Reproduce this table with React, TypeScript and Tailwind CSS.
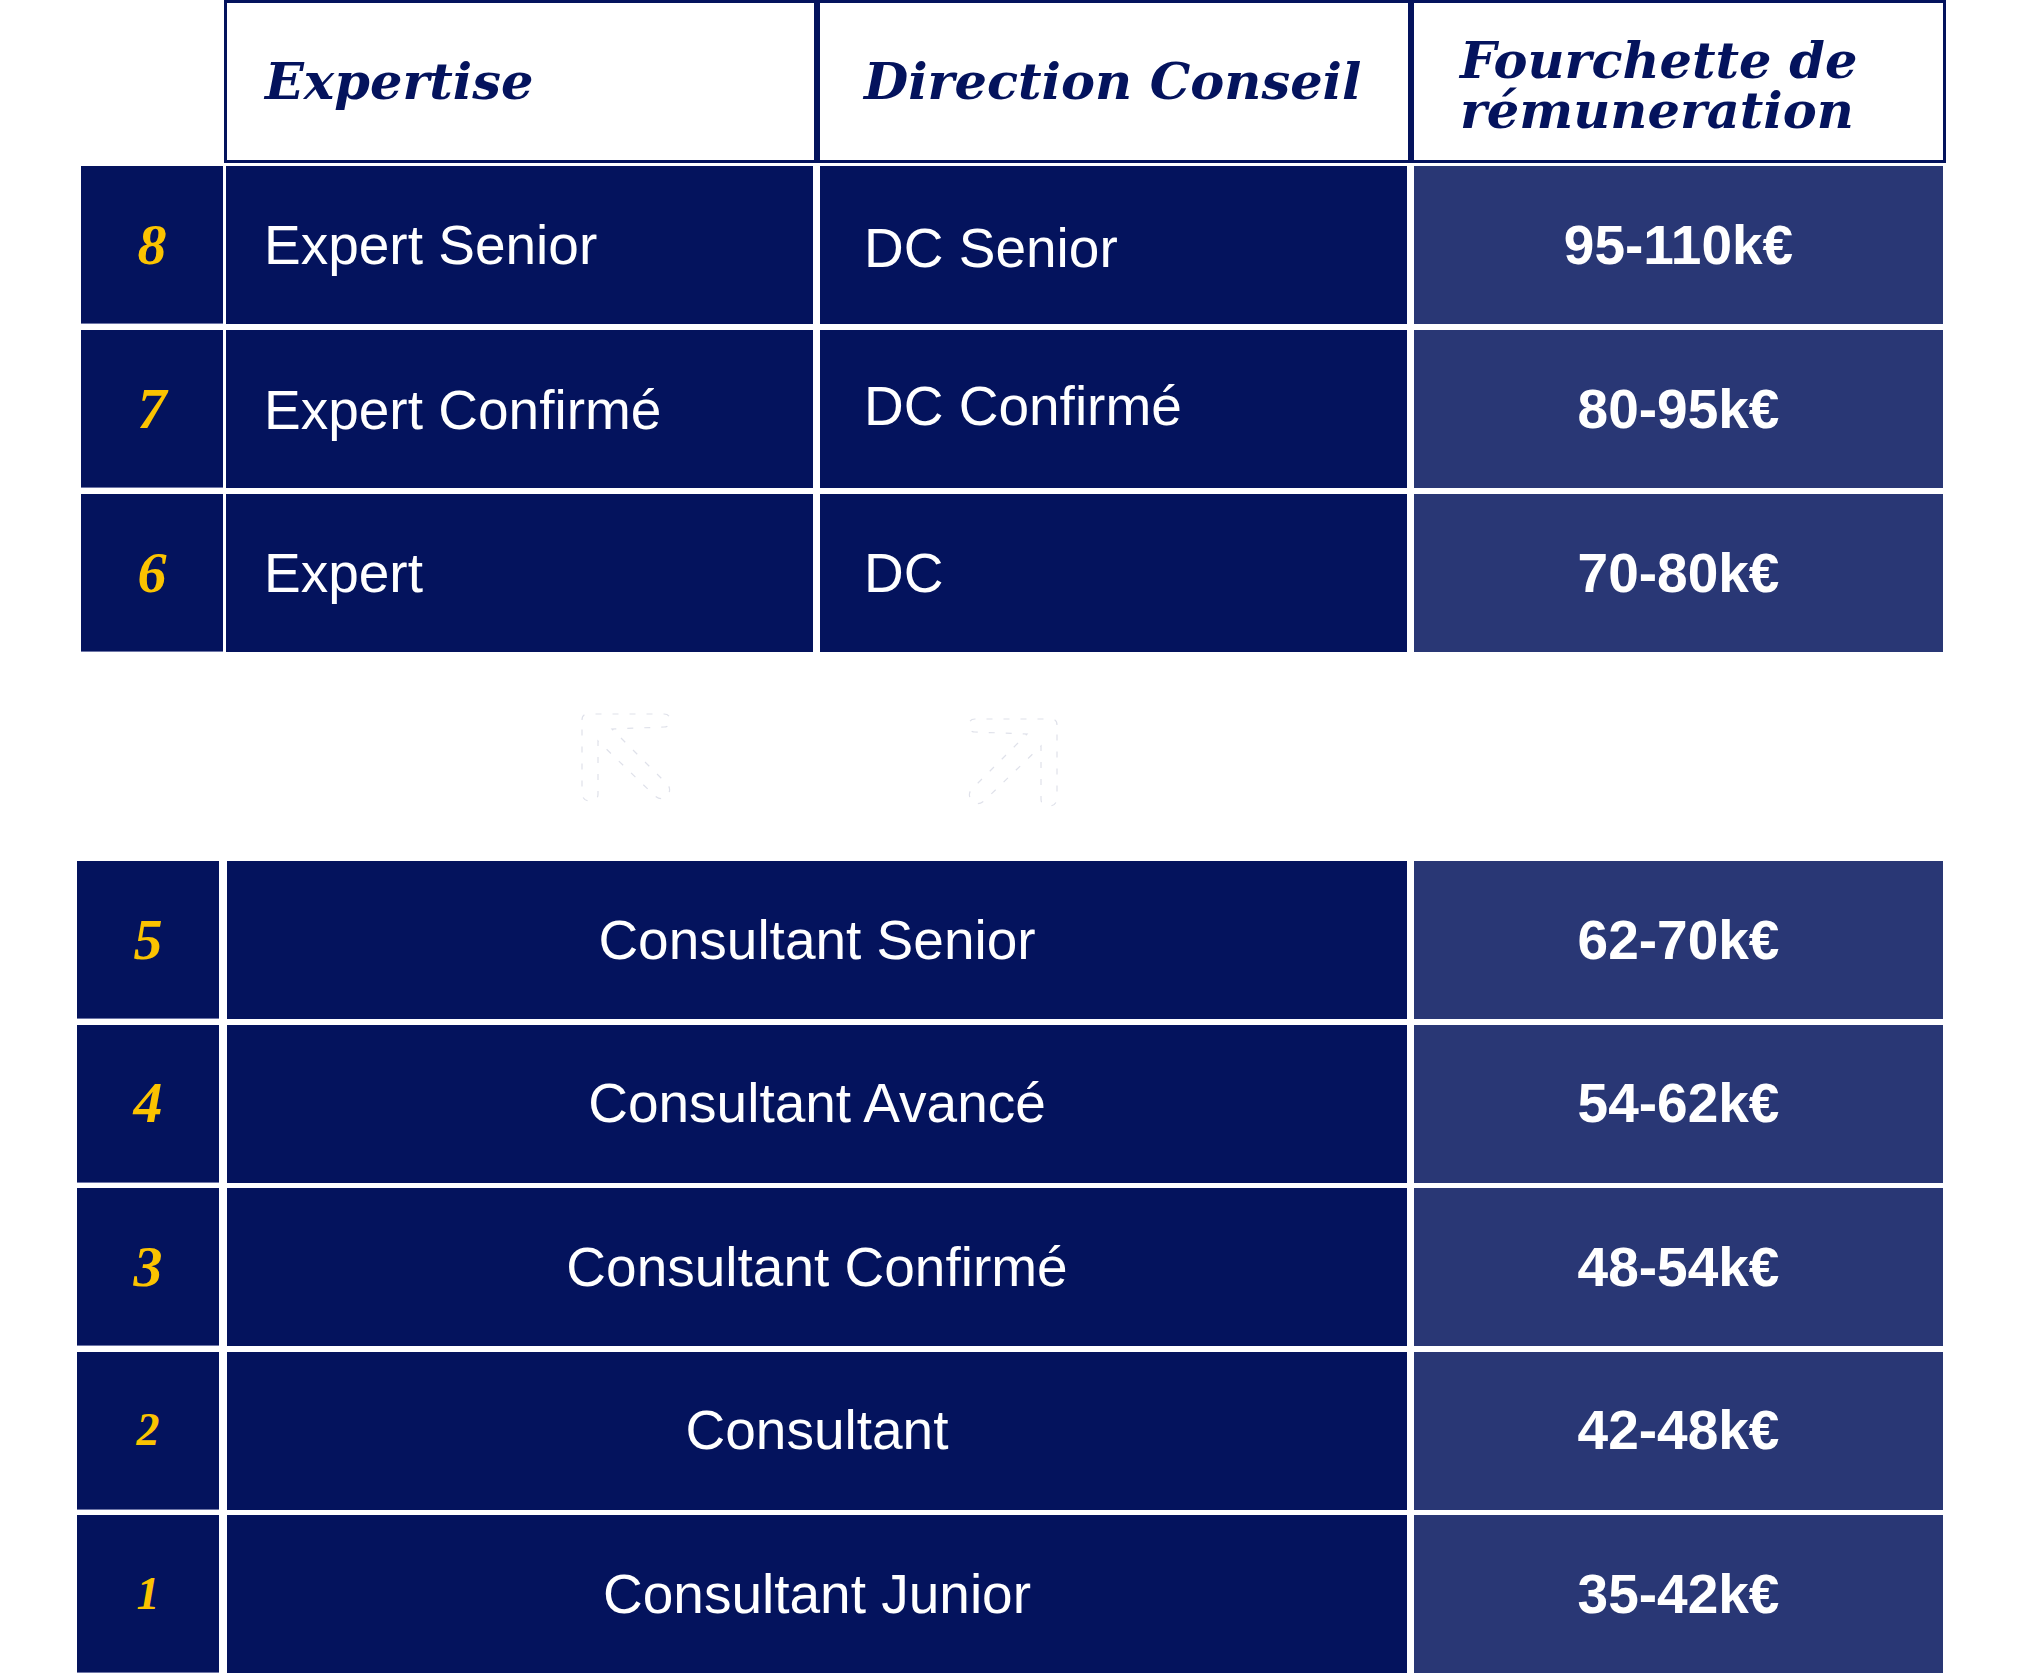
import React from 'react'

const topRows = [
  { level: '8', expertise: 'Expert Senior', direction: 'DC Senior', range: '95-110k€', exShift: '', dcShift: 'pt-[7px]' },
  { level: '7', expertise: 'Expert Confirmé', direction: 'DC Confirmé', range: '80-95k€', exShift: 'pt-[3px]', dcShift: 'pb-[6px]' },
  { level: '6', expertise: 'Expert', direction: 'DC', range: '70-80k€', exShift: '', dcShift: '' },
]

const bottomRows = [
  { level: '5', title: 'Consultant Senior', range: '62-70k€', small: false },
  { level: '4', title: 'Consultant Avancé', range: '54-62k€', small: false },
  { level: '3', title: 'Consultant Confirmé', range: '48-54k€', small: false },
  { level: '2', title: 'Consultant', range: '42-48k€', small: true },
  { level: '1', title: 'Consultant Junior', range: '35-42k€', small: true },
]

const serif = "font-['DejaVu_Serif','Liberation_Serif',serif]"
const sans = "font-['Liberation_Sans',Arial,sans-serif]"

// faint dashed outline of a thick corner arrow, pointing up-left
function GhostArrow({ flip }: { flip?: boolean }) {
  return (
    <svg width="100" height="100" viewBox="0 0 100 100" className={flip ? '-scale-x-100' : ''}>
      <path
        d="M 7 12 Q 7 6 13 6 L 89 6 Q 95 6 95 12 Q 95 19 89 19 L 37 21 L 93 77 Q 97 83 91 89 Q 85 93 79 87 L 23 33 L 23 86 Q 23 93 15 93 Q 8 93 7 86 Z"
        fill="none"
        stroke="#dfe1ea"
        strokeWidth="1.2"
        strokeDasharray="6 11"
      />
    </svg>
  )
}

function Level({ value, small }: { value: string; small?: boolean }) {
  return (
    <div className="w-[142px] h-full bg-[#04135d] border-b border-[#6d75a6] flex items-center justify-center">
      <span
        className={`font-['Liberation_Serif',serif] font-bold italic leading-none text-[#fbc300] ${
          small ? 'text-[46px]' : 'text-[58px]'
        }`}
      >
        {value}
      </span>
    </div>
  )
}

function Range({ value }: { value: string }) {
  return (
    <div className="ml-[7px] w-[529px] h-full bg-[#293775] flex items-center justify-center">
      <span className={`${sans} font-bold text-[55px] leading-none text-white`}>{value}</span>
    </div>
  )
}

export default function App() {
  return (
    <div className="w-[2021px] h-[1676px] bg-white flex flex-col">
      {/* header */}
      <div className="flex h-[163px] ml-[224px]">
        <div className="w-[593px] h-full border-[3px] border-[#04135d] flex items-center pl-[38px]">
          <span className={`${serif} font-bold italic text-[51px] leading-none text-[#04135d]`}>Expertise</span>
        </div>
        <div className="w-[594px] h-full border-[3px] border-[#04135d] flex items-center pl-[44px]">
          <span className={`${serif} font-bold italic text-[51px] leading-none text-[#04135d]`}>Direction Conseil</span>
        </div>
        <div className="w-[535px] h-full border-[3px] border-[#04135d] flex items-center pl-[46px] pt-[6px]">
          <span className={`${serif} font-bold italic text-[51px] leading-[50px] text-[#04135d]`}>
            Fourchette de
            <br />
            rémuneration
          </span>
        </div>
      </div>

      {/* expert / direction conseil levels */}
      <div className="flex flex-col gap-[6px] mt-[3px]">
        {topRows.map((r) => (
          <div key={r.level} className="flex h-[158px] ml-[81px]">
            <Level value={r.level} />
            <div className={`ml-[3px] w-[587px] h-full bg-[#04135d] flex items-center pl-[38px] ${r.exShift}`}>
              <span className={`${sans} text-[55px] leading-none text-white`}>{r.expertise}</span>
            </div>
            <div className={`ml-[7px] w-[587px] h-full bg-[#04135d] flex items-center pl-[44px] ${r.dcShift}`}>
              <span className={`${sans} text-[55px] leading-none text-white`}>{r.direction}</span>
            </div>
            <Range value={r.range} />
          </div>
        ))}
      </div>

      {/* split arrows */}
      <div className="h-[209px] flex items-start">
        <div className="ml-[575px] mt-[56px]">
          <GhostArrow />
        </div>
        <div className="ml-[289px] mt-[61px]">
          <GhostArrow flip />
        </div>
      </div>

      {/* consultant levels */}
      <div className="flex flex-col gap-[5.5px]">
        {bottomRows.map((r) => (
          <div key={r.level} className="flex h-[158px] ml-[77px]">
            <Level value={r.level} small={r.small} />
            <div className="ml-[8px] w-[1180px] h-full bg-[#04135d] flex items-center justify-center">
              <span className={`${sans} text-[55px] leading-none text-white`}>{r.title}</span>
            </div>
            <Range value={r.range} />
          </div>
        ))}
      </div>
    </div>
  )
}
